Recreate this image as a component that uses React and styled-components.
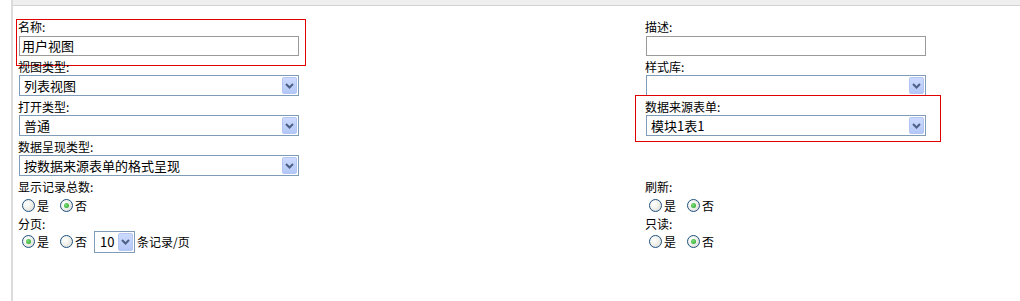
import React from "react";
import styled, { createGlobalStyle } from "styled-components";

const GlobalStyle = createGlobalStyle`
  html, body {
    margin: 0;
    padding: 0;
    background: #fff;
  }
  body {
    font-family: "Noto Sans CJK SC", "Liberation Sans", sans-serif;
    font-size: 12px;
    color: #000;
  }
`;

const Frame = styled.div`
  margin-left: 11px;
  border-left: 2px solid #dcdcdc;
  height: 301px;
  box-sizing: border-box;
`;

const TopStrip = styled.div`
  height: 5px;
  background: #efefef;
  border-bottom: 1px solid #d2d2d2;
`;

const Form = styled.div`
  display: grid;
  grid-template-columns: 627px 1fr;
  padding: 13px 0 0 5px;
`;

const Column = styled.div`
  display: flex;
  flex-direction: column;
`;

const Field = styled.div`
  position: relative;
`;

const Highlight = styled.div`
  position: absolute;
  left: ${(p) => p.$left}px;
  top: ${(p) => p.$top}px;
  width: ${(p) => p.$w}px;
  height: ${(p) => p.$h}px;
  box-sizing: border-box;
  border: 1px solid #e00000;
  pointer-events: none;
`;

const Label = styled.div`
  height: 16px;
  line-height: 16px;
  font-size: 12px;
  white-space: nowrap;
`;

const TextInput = styled.div`
  margin: 1px 0 3px 1px;
  width: 280px;
  height: 20px;
  box-sizing: border-box;
  border: 1px solid #9a9a9a;
  padding-left: 2px;
  font-size: 13px;
  line-height: 18px;
`;

const SelectBox = styled.div`
  display: flex;
  align-items: center;
  margin: ${(p) => (p.$inline ? "0" : "0 0 3px 1px")};
  width: ${(p) => p.$w}px;
  height: ${(p) => (p.$inline ? 22 : 21)}px;
  box-sizing: border-box;
  border: 1px solid #7f9db9;
  padding-left: ${(p) => (p.$inline ? 5 : 4)}px;
  font-size: 13px;
  line-height: 19px;
  white-space: nowrap;
  background: #fff;
`;

const DropButton = styled.span`
  margin-left: auto;
  margin-right: 1px;
  width: 15px;
  height: ${(p) => (p.$inline ? 18 : 17)}px;
  box-sizing: border-box;
  border: 1px solid #b3c6f3;
  border-radius: 2px;
  background: linear-gradient(#ccdafd, #b4c8f8);
  display: flex;
  align-items: center;
  justify-content: center;
`;

const RadioRow = styled.div`
  display: flex;
  align-items: center;
  height: 21px;
  margin-top: ${(p) => (p.$tight ? -1 : 0)}px;
  gap: 7px;
  font-size: 12px;
`;

const Option = styled.span`
  display: inline-flex;
  align-items: center;
  white-space: nowrap;
`;

const RadioDot = styled.span`
  position: relative;
  width: 13px;
  height: 13px;
  margin: 0 2px 0 4px;
  box-sizing: border-box;
  border: 1px solid #1c5180;
  border-radius: 50%;
  background: radial-gradient(circle at 35% 35%, #ffffff 0%, #f1f1ec 45%, #d6d6cd 100%);

  &::after {
    content: "";
    display: ${(p) => (p.$on ? "block" : "none")};
    position: absolute;
    left: 3px;
    top: 3px;
    width: 5px;
    height: 5px;
    border-radius: 50%;
    background: radial-gradient(circle at 40% 40%, #7fe07f, #1f9d1f);
  }
`;

const Spacer = styled.div`
  height: ${(p) => p.$h}px;
`;

const Chevron = () => (
  <svg width="9" height="6" viewBox="0 0 9 6">
    <polyline points="1,1 4.5,4.5 8,1" fill="none" stroke="#4d6185" strokeWidth="2" />
  </svg>
);

const Select = ({ value, w = 280, inline }) => (
  <SelectBox $w={w} $inline={inline}>
    <span>{value}</span>
    <DropButton $inline={inline}>
      <Chevron />
    </DropButton>
  </SelectBox>
);

const Radio = ({ on, children }) => (
  <Option>
    <RadioDot $on={on} />
    {children}
  </Option>
);

const YesNo = ({ yes, tight, children }) => (
  <RadioRow $tight={tight}>
    <Radio on={yes}>是</Radio>
    <Radio on={!yes}>否</Radio>
    {children}
  </RadioRow>
);

export default function App() {
  return (
    <>
      <GlobalStyle />
      <Frame>
        <TopStrip />
        <Form>
          <Column>
            <Field>
              <Highlight $left={-2} $top={0} $w={290} $h={47} />
              <Label>名称:</Label>
              <TextInput>用户视图</TextInput>
            </Field>
            <Field>
              <Label>视图类型:</Label>
              <Select value="列表视图" />
            </Field>
            <Field>
              <Label>打开类型:</Label>
              <Select value="普通" />
            </Field>
            <Field>
              <Label>数据呈现类型:</Label>
              <Select value="按数据来源表单的格式呈现" />
            </Field>
            <Label>显示记录总数:</Label>
            <YesNo yes={false} />
            <Label>分页:</Label>
            <YesNo yes tight>
              <Select value="10" w={41} inline />
              <span style={{ marginLeft: -5 }}>条记录/页</span>
            </YesNo>
          </Column>
          <Column>
            <Field>
              <Label>描述:</Label>
              <TextInput />
            </Field>
            <Field>
              <Label>样式库:</Label>
              <Select value="" />
            </Field>
            <Field>
              <Highlight $left={-10} $top={-4} $w={306} $h={47} />
              <Label>数据来源表单:</Label>
              <Select value="模块1表1" />
            </Field>
            <Spacer $h={40} />
            <Label>刷新:</Label>
            <YesNo yes={false} />
            <Label>只读:</Label>
            <YesNo yes={false} tight />
          </Column>
        </Form>
      </Frame>
    </>
  );
}
